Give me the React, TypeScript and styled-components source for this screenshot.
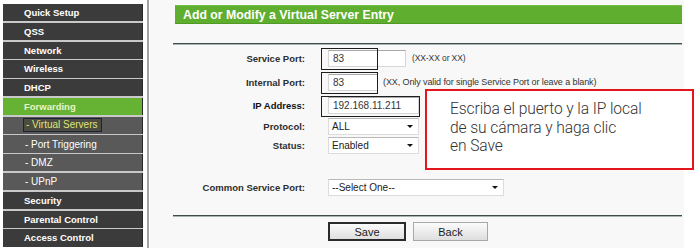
import styled, { createGlobalStyle } from "styled-components";

const GlobalStyle = createGlobalStyle`
	html, body {
		margin: 0;
		padding: 0;
		background: #ffffff;
	}
	body {
		font-family: "Liberation Sans", Arial, sans-serif;
	}
`;

const menu = [
	{ label: "Quick Setup", kind: "main" },
	{ label: "QSS", kind: "main" },
	{ label: "Network", kind: "main" },
	{ label: "Wireless", kind: "main" },
	{ label: "DHCP", kind: "main" },
	{ label: "Forwarding", kind: "active" },
	{ label: "- Virtual Servers", kind: "current" },
	{ label: "- Port Triggering", kind: "sub" },
	{ label: "- DMZ", kind: "sub" },
	{ label: "- UPnP", kind: "sub" },
	{ label: "Security", kind: "main" },
	{ label: "Parental Control", kind: "main" },
	{ label: "Access Control", kind: "main" },
];

const StyledPage = styled.div`
	position: relative;
	display: flex;
	width: 700px;
	height: 248px;
	padding-left: 3px;
	box-sizing: border-box;
	overflow: hidden;
`;

const Sidebar = styled.nav`
	align-self: flex-start;
	margin-top: 4px;
	width: 140px;
	display: flex;
	flex-direction: column;
	gap: 1.6px;
	background: #c9c9c9;
`;

const MenuItem = styled.div<{ $kind: string }>`
	height: 17.2px;
	display: flex;
	align-items: center;
	padding-left: ${(p) => (p.$kind === "main" || p.$kind === "active" ? "21px" : "22px")};
	font-size: ${(p) => (p.$kind === "sub" || p.$kind === "current" ? "10px" : "9.5px")};
	font-weight: ${(p) => (p.$kind === "sub" || p.$kind === "current" ? 400 : 700)};
	color: ${(p) => (p.$kind === "active" ? "#e8f5c8" : "#ffffff")};
	background: ${(p) =>
		p.$kind === "active"
			? "#66b233"
			: p.$kind === "sub" || p.$kind === "current"
			? "#595959"
			: "#3b3b3b"};
	border-right: 1px solid #2a2a2a;
	white-space: nowrap;
`;

const CurrentMark = styled.span`
	display: inline-block;
	padding: 0 3px 0 2px;
	margin-left: -2px;
	line-height: 12px;
	border: 1px solid #1c2038;
	background: #4c4c40;
	color: #dfe67a;
`;

const VRule = styled.div`
	width: 2px;
	margin-left: 4px;
	background: #a3a3a3;
`;

const Main = styled.main`
	margin-left: 1px;
	width: 534px;
	background: #f8f8f8;
	padding: 5px 2px 0 25px;
	box-sizing: border-box;
`;

const Header = styled.h1`
	margin: 0;
	height: 19px;
	line-height: 19px;
	padding-left: 8px;
	background: #5fae2f;
	border-top: 1px solid #74bd44;
	border-bottom: 1px solid #4f9a24;
	box-sizing: border-box;
	color: #ffffff;
	font-size: 12.3px;
	font-weight: 700;
`;

const Rule = styled.div<{ $top: number }>`
	margin: ${(p) => p.$top}px 0 0 -2px;
	height: 1px;
	background: #3e4c4c;
	border-bottom: 1px solid #a9b3b3;
`;

const Form = styled.div`
	display: flex;
	flex-direction: column;
	margin-top: 1px;
`;

const Row = styled.div<{ $h: number; $gap?: number }>`
	display: grid;
	grid-template-columns: 130px auto;
	column-gap: 23px;
	align-items: center;
	height: ${(p) => p.$h}px;
	margin-top: ${(p) => p.$gap ?? 0}px;
`;

const Label = styled.label<{ $strong?: boolean }>`
	text-align: right;
	font-size: 9.5px;
	font-weight: 700;
	color: ${(p) => (p.$strong ? "#111" : "#2e2e2e")};
	white-space: nowrap;
`;

const Control = styled.div`
	display: flex;
	align-items: center;
	height: 100%;
`;

const Marked = styled.div<{ $w: number }>`
	position: relative;
	display: flex;
	align-items: center;
	height: 100%;

	&::after {
		content: "";
		position: absolute;
		left: -7px;
		top: 2px;
		bottom: 0;
		width: ${(p) => p.$w}px;
		border: 1.5px solid #1e1e1e;
		box-sizing: border-box;
		pointer-events: none;
	}
`;

const TextField = styled.div<{ $w: number }>`
	width: ${(p) => p.$w}px;
	height: 17px;
	box-sizing: border-box;
	padding-left: 4px;
	background: #ffffff;
	border: 1px solid #d6d6d6;
	border-top-color: #a9a9a9;
	font-size: 10px;
	line-height: 15px;
	color: #333;
`;

const Hint = styled.span<{ $left: number; $size: number }>`
	margin-left: ${(p) => p.$left}px;
	font-size: ${(p) => p.$size}px;
	letter-spacing: -0.1px;
	color: #333;
	white-space: nowrap;
`;

const Select = styled.div<{ $w: number }>`
	width: ${(p) => p.$w}px;
	height: 17px;
	box-sizing: border-box;
	display: flex;
	align-items: center;
	justify-content: space-between;
	padding: 0 5px 0 3px;
	background: #ffffff;
	border: 1px solid #dcdcdc;
	border-top-color: #b9b9b9;
	font-size: 10px;
	color: #222;

	&::after {
		content: "";
		border-left: 3px solid transparent;
		border-right: 3px solid transparent;
		border-top: 3px solid #111;
	}
`;

const Buttons = styled.div`
	display: flex;
	gap: 7px;
	margin: 5px 0 0 153px;
`;

const Button = styled.button<{ $w: number; $marked?: boolean }>`
	width: ${(p) => p.$w}px;
	height: 19px;
	padding: 0;
	font-family: "Liberation Sans", Arial, sans-serif;
	font-size: 11px;
	color: #1a1a1a;
	background: linear-gradient(#fbfbfb, #dedede);
	border: ${(p) => (p.$marked ? "2px solid #2a2a2a" : "1px solid #a8a8a8")};
	box-sizing: border-box;
`;

const Callout = styled.div`
	position: absolute;
	left: 425px;
	top: 89px;
	width: 269px;
	height: 81px;
	box-sizing: border-box;
	padding: 9px 0 0 23px;
	background: #ffffff;
	border: 2px solid #e3161b;
	font-family: Roboto, "Liberation Sans", sans-serif;
	font-weight: 300;
	font-size: 15.6px;
	letter-spacing: -0.1px;
	line-height: 18.7px;
	color: #333333;
`;

const App = () => {
	return (
		<>
			<GlobalStyle />
			<StyledPage>
				<Sidebar>
					{menu.map((item) => (
						<MenuItem key={item.label} $kind={item.kind}>
							{item.kind === "current" ? (
								<CurrentMark>{item.label}</CurrentMark>
							) : (
								item.label
							)}
						</MenuItem>
					))}
				</Sidebar>
				<VRule />
				<Main>
					<Header>Add or Modify a Virtual Server Entry</Header>
					<Rule $top={19} />
					<Form>
						<Row $h={24}>
							<Label>Service Port:</Label>
							<Control>
								<Marked $w={57}>
									<TextField $w={78}>83</TextField>
								</Marked>
								<Hint $left={6} $size={8.5}>
									(XX-XX or XX)
								</Hint>
							</Control>
						</Row>
						<Row $h={24}>
							<Label>Internal Port:</Label>
							<Control>
								<Marked $w={57}>
									<TextField $w={50}>83</TextField>
								</Marked>
								<Hint $left={5} $size={9}>
									(XX, Only valid for single Service Port or leave a blank)
								</Hint>
							</Control>
						</Row>
						<Row $h={23}>
							<Label $strong>IP Address:</Label>
							<Control>
								<Marked $w={99}>
									<TextField $w={91}>192.168.11.211</TextField>
								</Marked>
							</Control>
						</Row>
						<Row $h={19}>
							<Label>Protocol:</Label>
							<Control>
								<Select $w={91}>ALL</Select>
							</Control>
						</Row>
						<Row $h={18}>
							<Label>Status:</Label>
							<Control>
								<Select $w={91}>Enabled</Select>
							</Control>
						</Row>
						<Row $h={22} $gap={22}>
							<Label>Common Service Port:</Label>
							<Control>
								<Select $w={176}>--Select One--</Select>
							</Control>
						</Row>
					</Form>
					<Rule $top={17} />
					<Buttons>
						<Button $w={78} $marked>
							Save
						</Button>
						<Button $w={75}>Back</Button>
					</Buttons>
				</Main>
				<Callout>
					Escriba el puerto y la IP local
					<br />
					de su cámara y haga clic
					<br />
					en Save
				</Callout>
			</StyledPage>
		</>
	);
};

export default App;
